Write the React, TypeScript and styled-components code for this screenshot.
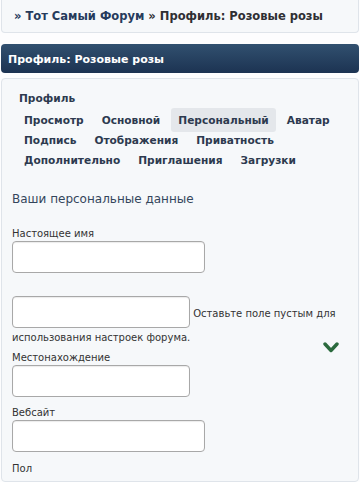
import styled, { createGlobalStyle } from "styled-components";

const GlobalStyle = createGlobalStyle`
  html, body {
    margin: 0;
    padding: 0;
    background: #fdfdfe;
  }
  body {
    font-family: "DejaVu Sans", Verdana, sans-serif;
    overflow: hidden;
  }
`;

const Page = styled.div`
  display: flex;
  flex-direction: column;
  padding: 0 1px;
  width: 358px;
  height: 482px;
  overflow: hidden;
`;

const Breadcrumb = styled.div`
  display: flex;
  align-items: center;
  height: 33px;
  box-sizing: border-box;
  padding: 0 12px;
  background: #f6f8fa;
  border: 1px solid #dfe4ea;
  border-top: none;
  border-radius: 0 0 4px 4px;
  font-size: 11.5px;
  font-weight: bold;
  color: #2f2f33;
  white-space: nowrap;
`;

const Crumb = styled.span`
  color: #263b5c;
`;

const TitleBar = styled.div`
  margin-top: 11px;
  height: 29px;
  display: flex;
  align-items: center;
  padding: 1px 7px 0;
  box-sizing: border-box;
  border-radius: 4px;
  background: linear-gradient(#31506f, #1c3352);
  color: #ffffff;
  font-size: 11px;
  font-weight: bold;
`;

const Panel = styled.div`
  position: relative;
  margin-top: 5px;
  padding: 11px 10px 0 10px;
  background: #f6f8fa;
  border: 1px solid #dfe4ea;
  border-radius: 4px;
  flex: 1;
`;

const NavTitle = styled.div`
  padding-left: 7px;
  font-size: 10.6px;
  line-height: 16px;
  font-weight: bold;
  color: #2d3a4f;
`;

const Tabs = styled.div`
  display: flex;
  flex-wrap: wrap;
  margin-top: 4px;
  padding-left: 5px;
  padding-right: 6px;
`;

const Tab = styled.span<{ $active?: boolean }>`
  display: flex;
  align-items: center;
  height: 24px;
  margin: -2px 4px -2px 0;
  padding: 0 7px;
  border-radius: 3px;
  font-size: 10.6px;
  font-weight: bold;
  color: #2d3a4f;
  background: ${(p) => (p.$active ? "#e4e7eb" : "transparent")};
  white-space: nowrap;
`;

const Heading = styled.h2`
  margin: 21px 0 0 0;
  font-size: 12px;
  line-height: 16px;
  font-weight: normal;
  color: #34465c;
`;

const Field = styled.div<{ $top: number }>`
  margin-top: ${(p) => p.$top}px;
`;

const Label = styled.div`
  font-size: 10px;
  line-height: 14px;
  color: #333;
`;

const Input = styled.input<{ $w: number }>`
  display: inline-block;
  box-sizing: border-box;
  width: ${(p) => p.$w}px;
  height: 32px;
  margin: 0;
  border: 1px solid #a8a8a8;
  border-radius: 4px;
  background: #ffffff;
  box-shadow: inset 0 1px 1px rgba(0, 0, 0, 0.08);
  vertical-align: baseline;
`;

const Hint = styled.div`
  font-size: 10px;
  line-height: 20px;
  color: #333;
`;

const ScrollDown = styled.div`
  position: absolute;
  left: 321px;
  top: 260px;
  width: 16px;
  height: 12px;
  color: #2b6a3d;
`;

const tabs = [
  "Просмотр",
  "Основной",
  "Персональный",
  "Аватар",
  "Подпись",
  "Отображения",
  "Приватность",
  "Дополнительно",
  "Приглашения",
  "Загрузки",
];

export default function App() {
  return (
    <>
      <GlobalStyle />
      <Page>
        <Breadcrumb>
          <Crumb>»&nbsp;Тот Самый Форум</Crumb>&nbsp;» Профиль: Розовые розы
        </Breadcrumb>
        <TitleBar>Профиль: Розовые розы</TitleBar>
        <Panel>
          <NavTitle>Профиль</NavTitle>
          <Tabs>
            {tabs.map((t) => (
              <Tab key={t} $active={t === "Персональный"}>
                {t}
              </Tab>
            ))}
          </Tabs>
          <Heading>Ваши персональные данные</Heading>
          <Field $top={20}>
            <Label>Настоящее имя</Label>
            <Input $w={193} />
          </Field>
          <Field $top={23}>
            <Hint>
              <Input $w={178} /> Оставьте поле пустым для использования настроек форума.
            </Hint>
          </Field>
          <Field $top={3}>
            <Label>Местонахождение</Label>
            <Input $w={178} />
          </Field>
          <Field $top={9}>
            <Label>Вебсайт</Label>
            <Input $w={193} />
          </Field>
          <Field $top={10}>
            <Label>Пол</Label>
          </Field>
          <ScrollDown>
            <svg width="16" height="12" viewBox="0 0 16 12">
              <path d="M2 2 L8 8.5 L14 2" fill="none" stroke="currentColor" strokeWidth="3.4" strokeLinecap="round" strokeLinejoin="round" />
            </svg>
          </ScrollDown>
        </Panel>
      </Page>
    </>
  );
}
